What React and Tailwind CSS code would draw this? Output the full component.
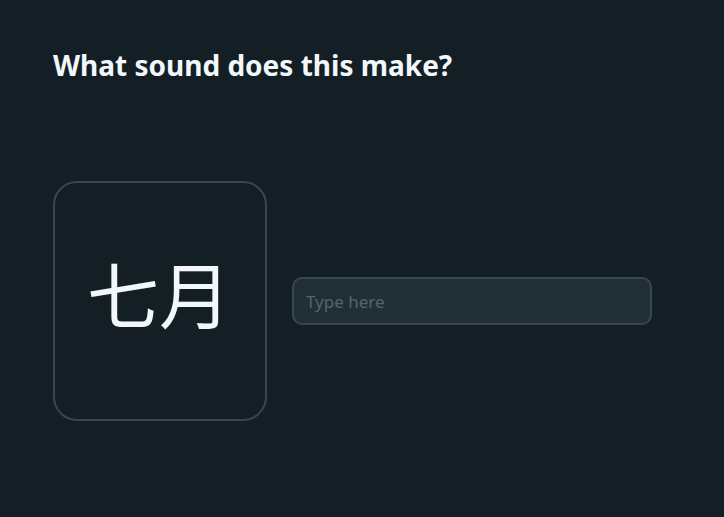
export default function App() {
  return (
    <div className="w-[724px] h-[517px] bg-[#131f24] px-[53px] pt-[46px]" style={{ fontFamily: '"Noto Sans", "Liberation Sans", sans-serif' }}>
      <h1 className="text-[28px] leading-[38px] font-bold text-[#f1f7fb]">What sound does this make?</h1>
      <div className="flex items-center gap-[25px] mt-[97px]">
        <div className="w-[214px] h-[240px] rounded-[24px] border-2 border-[#37464f] flex items-center justify-center pb-[18px] shrink-0">
          <span className="text-[72px] leading-none text-[#f1f7fb] pr-[2px]" style={{ fontFamily: '"Noto Sans CJK SC", sans-serif' }}>七月</span>
        </div>
        <input type="text" placeholder="Type here"
          className="w-[360px] h-[48px] rounded-[10px] border-2 border-[#37464f] bg-[#202f36] px-[12px] text-[17px] text-[#f1f7fb] placeholder:text-[#52656d] outline-none" />
      </div>
    </div>
  )
}
